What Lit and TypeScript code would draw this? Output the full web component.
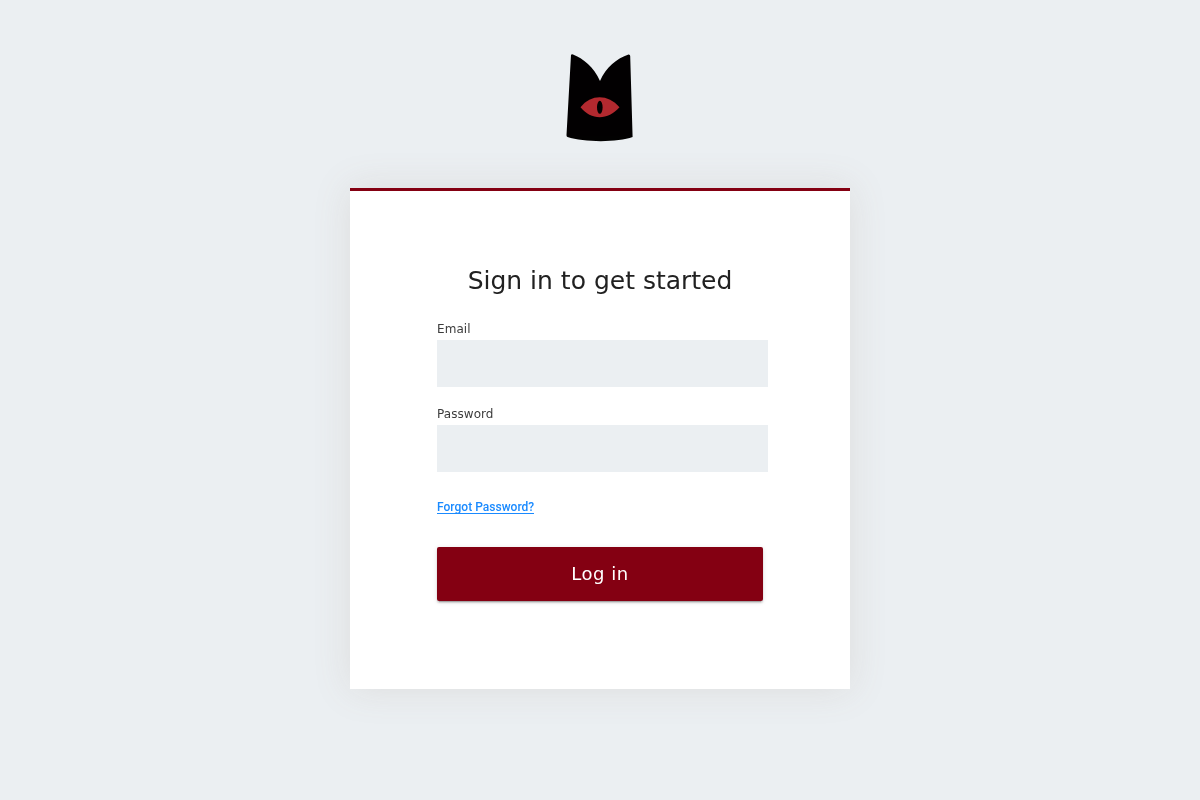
import { LitElement, html, css } from "lit";
import { customElement } from "lit/decorators.js";

@customElement("app-root")
class AppRoot extends LitElement {
  static styles = css`
    :host { display: block; min-height: 800px; background: #ebeff2; font-family: "DejaVu Sans", sans-serif; overflow: hidden; }
    * { box-sizing: border-box; }
    .page { display: flex; flex-direction: column; align-items: center; padding-top: 50px; }
    .logo { display: block; width: 100px; height: 100px; margin-bottom: 38px; }
    .card { width: 500px; height: 501px; background: #fff; border-top: 3px solid #840012; padding: 71px 87px 0; box-shadow: 0 0 35px rgba(221, 221, 221, 0.99); }
    .content { will-change: transform; }
    h1 { margin: 0; font-size: 25px; line-height: 38px; font-weight: 400; color: #212121; text-align: center; white-space: nowrap; }
    label { display: block; font-size: 12px; line-height: 18px; letter-spacing: 0.06px; color: #3c3c3c; margin-top: 20px; }
    input { display: block; width: 331px; height: 47px; border: 0; padding: 0 12px; margin-top: 2px; background: #ebeff2; border-radius: 0; }
    .second { margin-top: 18px; }
    a { display: block; width: max-content; height: 15px; margin-top: 27px; margin-bottom: 33px; font: 500 12px/16px Roboto, sans-serif; letter-spacing: 0.02px; color: #1a8aff; text-decoration: none; border-bottom: 1px solid #1a8aff; }
    button { display: block; width: 326px; height: 54px; border: 0; border-radius: 2px; background: #840012; color: #fff; font: 400 18px "DejaVu Sans", sans-serif; letter-spacing: .54px; box-shadow: 0 3px 1px -2px rgba(0,0,0,.2), 0 2px 2px rgba(0,0,0,.14), 0 1px 5px rgba(0,0,0,.12); padding: 0 0 2px; }
  `;
  render() {
    return html`<main class="page">
      <svg class="logo" viewBox="550 50 100 100" aria-label="Logo">
        <path d="M571 55Q571.5 54 573 54.5C583 58.5 594 67 600 81C606 67 617 58.5 628.5 54.5Q630 54.3 630.2 56L632.6 137C618 142.5 584 142.5 567.5 137Q566.3 136.5 566.5 135Z" fill="#020001"/>
        <path d="M580.5 107.3C591 94 608 94 619.5 107.3C608 120.5 591 120.5 580.5 107.3Z" fill="#b3292f"/>
        <ellipse cx="599.8" cy="107.3" rx="2.8" ry="6.5" fill="#020001"/>
      </svg>
      <form class="card"><div class="content">
        <h1>Sign in to get started</h1>
        <label for="email">Email</label><input id="email" type="email" />
        <label class="second" for="password">Password</label><input id="password" type="password" />
        <a href="#">Forgot Password?</a>
        <button type="button">Log in</button>
      </div></form>
    </main>`;
  }
}
